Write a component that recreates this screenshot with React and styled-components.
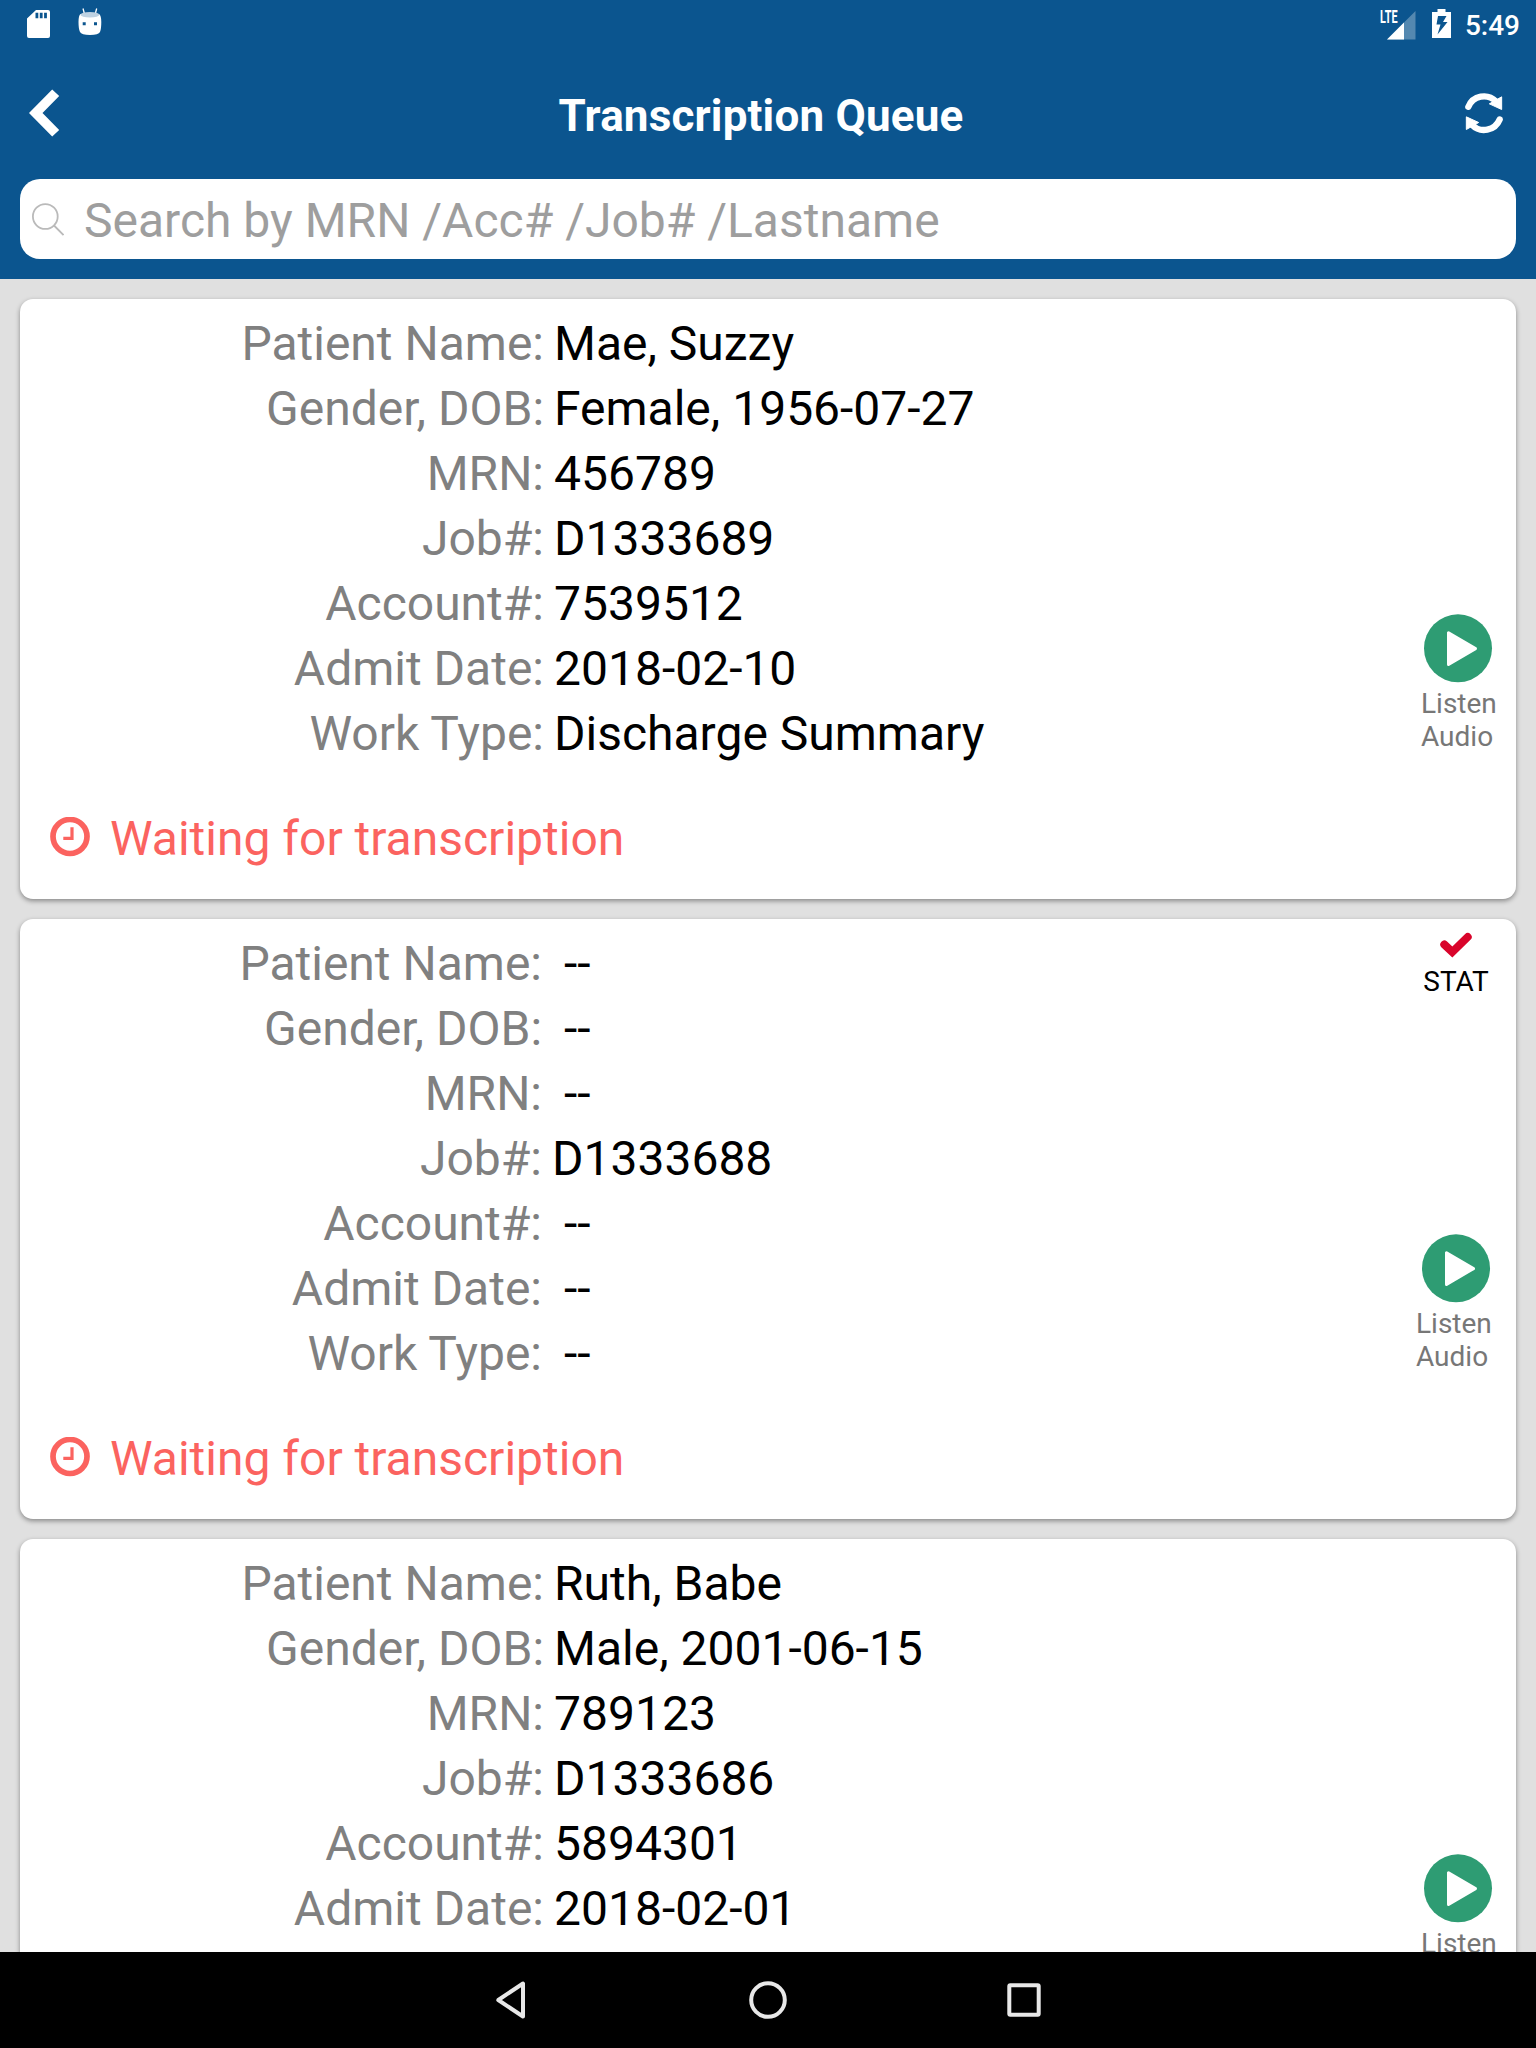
import React from "react";
import styled, { createGlobalStyle } from "styled-components";

const jobs = [
  {
    name: "Mae, Suzzy",
    gender: "Female, 1956-07-27",
    mrn: "456789",
    job: "D1333689",
    account: "7539512",
    admitDate: "2018-02-10",
    workType: "Discharge Summary",
  },
  {
    job: "D1333688",
    stat: true,
  },
  {
    name: "Ruth, Babe",
    gender: "Male, 2001-06-15",
    mrn: "789123",
    job: "D1333686",
    account: "5894301",
    admitDate: "2018-02-01",
  },
];

const fields = [
  ["Patient Name:", "name"],
  ["Gender, DOB:", "gender"],
  ["MRN:", "mrn"],
  ["Job#:", "job"],
  ["Account#:", "account"],
  ["Admit Date:", "admitDate"],
  ["Work Type:", "workType"],
];

function StatusBar() {
  return (
    <StatusContainer>
      <StatusGroup>
        <svg width="24" height="28" viewBox="0 0 24 28">
          <path
            fillRule="evenodd"
            fill="#fff"
            d="M9 0H21Q23 0 23 2V26Q23 28 21 28H2Q0 28 0 26V8.500ZM8.500 2.700V8.300H11.300V2.700ZM12.800 2.700V8.300H15.600V2.700ZM17.100 2.700V8.300H19.900V2.700Z"
          />
        </svg>
        <RobotIcon width="24" height="28" viewBox="0 0 24 28">
          <path
            d="M5 0.500L6.500 6M18.700 0.500L17.200 6"
            stroke="#fff"
            strokeWidth="1.300"
          />
          <path
            fillRule="evenodd"
            fill="#fff"
            d="M2.500 6Q0.500 7.500 0.500 14Q0.500 21 2 24Q3.500 27 12 27Q20.500 27 22 24Q23.300 21 23.300 14Q23.300 7.500 21 6ZM4.700 14.300V17.300H7.700V14.300ZM16 14.300V17.300H19V14.300Z"
          />
          <ellipse cx="11.900" cy="6.800" rx="9.500" ry="2.800" fill="#bfd2e2" />
        </RobotIcon>
      </StatusGroup>
      <StatusGroup>
        <SignalIcon width="37" height="30" viewBox="0 0 37 30">
          <text
            x="0"
            y="13"
            fill="#fff"
            fontFamily="Roboto, sans-serif"
            fontWeight="700"
            fontSize="17.500"
            transform="scale(0.620 1)"
          >
            LTE
          </text>
          <path d="M35.500 1V29.500H7Z" fill="#fff" opacity="0.300" />
          <path d="M24 12.500V29.500H7Z" fill="#fff" />
        </SignalIcon>
        <BatteryIcon width="19" height="29" viewBox="0 0 19 29">
          <path
            fillRule="evenodd"
            fill="#fff"
            d="M5.500 0H13.500V3H19V29H0V3H5.500ZM6 7L4.500 15.500H8.500L5.500 25.500L15.500 13H11L14.500 7Z"
          />
        </BatteryIcon>
        <Time>5:49</Time>
      </StatusGroup>
    </StatusContainer>
  );
}

function Header() {
  return (
    <HeaderContainer>
      <StatusBar />
      <TitleBar>
        <IconButton>
          <svg width="31" height="48" viewBox="0 0 31 48">
            <path
              fill="#fff"
              d="M0 24L23.200 0.500L30.200 7L13.500 24L30.200 41L23.200 47.500Z"
            />
          </svg>
        </IconButton>
        <Title>Transcription Queue</Title>
        <IconButton>
          <svg width="38" height="41" viewBox="495 278.500 114 123">
            <g
              fill="none"
              stroke="#fff"
              strokeWidth="19"
              strokeLinecap="round"
            >
              <path d="M505 320A50.500 50.500 0 0 1 588 304" />
              <path d="M599 358A50.500 50.500 0 0 1 516 374" />
            </g>
            <g fill="#fff" stroke="#fff" strokeWidth="3" strokeLinejoin="round">
              <path d="M605 290V328L568 311Z" />
              <path d="M499 388V350L536 367Z" />
            </g>
          </svg>
        </IconButton>
      </TitleBar>
      <SearchBox>
        <svg width="32" height="33" viewBox="0 0 32 33">
          <g fill="none" stroke="#bababa" strokeWidth="1.800">
            <circle cx="13.300" cy="13.500" r="12.400" />
            <path d="M22 22.500L31.500 32" />
          </g>
        </svg>
        <Placeholder>Search by MRN /Acc# /Job# /Lastname</Placeholder>
      </SearchBox>
    </HeaderContainer>
  );
}

function JobCard({ job }) {
  return (
    <Card>
      <Details>
        {fields.map(([label, key]) => (
          <Row key={key}>
            <Label $stat={job.stat}>{label}</Label>
            <Value $empty={!job[key]}>{job[key] || "--"}</Value>
          </Row>
        ))}
        <Waiting>
          <svg width="40" height="40" viewBox="0 0 40 40">
            <g fill="none" stroke="#fb635f">
              <circle cx="20" cy="19.500" r="17" strokeWidth="5.700" />
              <path d="M22 10.200V21.400H13.300" strokeWidth="3.200" />
            </g>
          </svg>
          <span>Waiting for transcription</span>
        </Waiting>
      </Details>
      <Actions $stat={job.stat}>
        {job.stat && (
          <Stat>
            <svg width="32" height="26" viewBox="0 0 32 26">
              <path
                d="M4.300 12.500L12.300 20L27.700 5"
                fill="none"
                stroke="#d9042b"
                strokeWidth="8"
                strokeLinecap="round"
                strokeLinejoin="miter"
              />
            </svg>
            <StatText>STAT</StatText>
          </Stat>
        )}
        <Listen $stat={job.stat}>
          <svg width="69" height="69" viewBox="0 0 69 69">
            <circle cx="34" cy="34.300" r="34" fill="#2e9c73" />
            <path
              d="M24.500 18.700V50.500L51.500 34.600Z"
              fill="#fff"
              stroke="#fff"
              strokeWidth="3"
              strokeLinejoin="round"
            />
          </svg>
          <span>Listen</span>
          <span>Audio</span>
        </Listen>
      </Actions>
    </Card>
  );
}

function NavBar() {
  return (
    <NavContainer>
      <svg width="40" height="40" viewBox="0 0 40 40">
        <path d="M6.300 20L31 3.500V36.500Z" />
      </svg>
      <svg width="40" height="40" viewBox="0 0 40 40">
        <circle cx="20" cy="20" r="16.800" />
      </svg>
      <svg width="40" height="40" viewBox="0 0 40 40">
        <rect x="5.300" y="5.300" width="29.400" height="29.400" rx="1" />
      </svg>
    </NavContainer>
  );
}

function App() {
  return (
    <Screen>
      <GlobalStyle />
      <Header />
      <List>
        {jobs.map((job) => (
          <JobCard key={job.job} job={job} />
        ))}
      </List>
      <NavBar />
    </Screen>
  );
}

export default App;

const GlobalStyle = createGlobalStyle`
  * {
    box-sizing: border-box;
  }
  body {
    margin: 0;
    font-family: Roboto, sans-serif;
  }
  svg {
    display: block;
    flex-shrink: 0;
  }
`;

const Screen = styled.div`
  display: flex;
  flex-direction: column;
  width: 1536px;
  height: 2048px;
  overflow: hidden;
  background-color: #e0e0e0;
`;

const HeaderContainer = styled.header`
  flex-shrink: 0;
  height: 279px;
  background-color: #0b558f;
`;

const StatusContainer = styled.div`
  display: flex;
  justify-content: space-between;
  height: 48px;
  padding: 0 16px 0 27px;
`;

const StatusGroup = styled.div`
  display: flex;
  align-items: flex-start;
  padding-top: 9px;

  > svg:first-child {
    margin-top: 1px;
  }
`;

const RobotIcon = styled.svg`
  margin-left: 27px;
  margin-top: -1px;
`;

const SignalIcon = styled.svg`
  overflow: visible;
`;

const BatteryIcon = styled.svg`
  margin-left: 15px;
`;

const Time = styled.span`
  margin-left: 14px;
  color: #fff;
  font-size: 28px;
  font-weight: 500;
  line-height: 33px;
`;

const TitleBar = styled.div`
  display: flex;
  align-items: center;
  height: 131px;
  padding: 0 33px 0 29px;
`;

const IconButton = styled.button`
  padding: 0 0 1px;
  border: none;
  background: none;
`;

const Title = styled.h1`
  flex: 1;
  margin: 0;
  padding: 4px 3px 0 0;
  color: #fff;
  font-size: 44px;
  font-weight: 700;
  line-height: 52px;
  letter-spacing: 0.17px;
  text-align: center;
`;

const SearchBox = styled.div`
  display: flex;
  align-items: center;
  height: 80px;
  margin: 0 20px;
  padding: 0 12px;
  border-radius: 20px;
  background-color: #fff;
`;

const Placeholder = styled.span`
  margin-left: 20px;
  padding-top: 4px;
  color: #9e9e9e;
  font-size: 48px;
  line-height: 56px;
`;

const List = styled.main`
  flex: 1;
  min-height: 0;
  padding: 20px 20px 0;
  overflow: hidden;
`;

const Card = styled.section`
  display: flex;
  height: 600px;
  margin-bottom: 20px;
  padding-top: 12px;
  border-radius: 13px;
  background-color: #fff;
  box-shadow: 0 2px 5px rgba(0, 0, 0, 0.4);
`;

const Details = styled.div`
  flex: 1;
  font-size: 48px;
  line-height: 65px;
`;

const Row = styled.div`
  display: flex;
`;

const Label = styled.span`
  width: ${(props) => (props.$stat ? 522 : 524)}px;
  color: #808080;
  text-align: right;
`;

const Value = styled.span`
  margin-left: ${(props) => (props.$empty ? 22 : 10)}px;
  color: #000;
`;

const Waiting = styled.div`
  display: flex;
  align-items: center;
  margin-top: 40px;
  padding-left: 30px;
  color: #fb635f;

  > span {
    margin-left: 20px;
  }
  > svg {
    margin-top: -4px;
  }
`;

const Actions = styled.div`
  display: flex;
  flex-direction: column;
  width: ${(props) => (props.$stat ? 100 : 95)}px;
`;

const Stat = styled.div`
  display: flex;
  flex-direction: column;
  align-items: center;
  width: 80px;
  padding-top: 1px;
`;

const StatText = styled.span`
  margin-top: 7px;
  color: #000;
  font-size: 28px;
  line-height: 33px;
`;

const Listen = styled.div`
  display: flex;
  flex-direction: column;
  margin-top: ${(props) => (props.$stat ? 236 : 303)}px;
  color: #777;
  font-size: 28px;
  line-height: 33px;

  > svg {
    margin-left: ${(props) => (props.$stat ? 6 : 3)}px;
    margin-bottom: 4px;
  }
`;

const NavContainer = styled.nav`
  display: flex;
  flex-shrink: 0;
  align-items: center;
  justify-content: center;
  gap: 216px;
  height: 96px;
  background-color: #000;

  > svg {
    fill: none;
    stroke: #e8e8e8;
    stroke-width: 4;
    stroke-linejoin: round;
  }
`;
